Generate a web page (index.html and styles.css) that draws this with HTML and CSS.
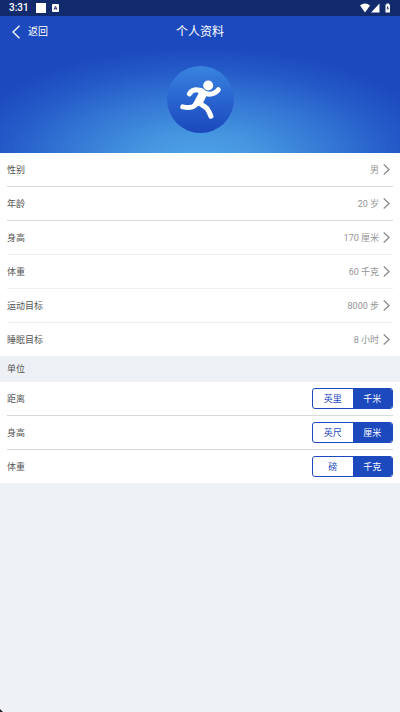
FILE: index.html
```html
<!DOCTYPE html>
<html lang="zh-CN">
<head>
<meta charset="utf-8">
<meta name="viewport" content="width=device-width, initial-scale=1">
<title>个人资料</title>
<link rel="stylesheet" href="styles.css">
</head>
<body>
<div class="status">
  <span class="clock">3:31</span>
  <span class="block"></span>
  <svg class="app" viewBox="0 0 7 8"><rect width="7" height="8" rx="1" fill="#fff"/><path d="M2 5.700 3.500 2.300 5 5.700M2.600 4.700h1.800" fill="none" stroke="#122b6c" stroke-width=".9"/></svg>
  <svg class="signals" viewBox="0 0 32 10"><path d="M0 2.400Q5 -1.400 10 2.400L5 9.500Z"/><path d="M19.500 .5V9.500H11Z"/><path d="M25.500 1.500h1V.5h2.500v1h1V9.500h-4.500Z"/><path d="M28 2.600 26.600 5.600h1v2.200l1.300-3h-.9z" fill="#122b6c"/></svg>
</div>
<header class="hero">
  <nav class="bar">
    <a class="back" href="#"><svg viewBox="0 0 8 14"><path d="M7.500 .7 1 7l6.500 6.300"/></svg>返回</a>
    <h1>个人资料</h1>
  </nav>
  <svg class="avatar" viewBox="0 0 200 200" role="img" aria-label="头像">
    <defs><linearGradient id="disc" x2="0" y2="1"><stop offset="0" stop-color="#3984df"/><stop offset=".5" stop-color="#2964d0"/><stop offset="1" stop-color="#1b48bc"/></linearGradient></defs>
    <circle cx="100" cy="100" r="100" fill="url(#disc)"/>
    <circle cx="123" cy="58" r="15" fill="#fff"/>
    <g fill="none" stroke="#fff" stroke-width="15" stroke-linecap="round" stroke-linejoin="round">
      <path d="M67 83Q74 72 86 71L102 73Q112 83 126 84Q143 83 153 71"/>
      <path d="M47 122Q74 127 84 117L93 106"/>
      <path d="M94 109 112 121Q121 126 126 138L131 150"/>
    </g>
    <path d="M88 68 106 67 120 84 105 116 84 122 78 112 94 82Z" fill="#fff"/>
  </svg>
</header>
<main>
  <ul class="list">
    <li><button class="row" type="button"><span>性别</span><span class="value">男</span><svg viewBox="0 0 6 10"><path d="M.5 .5 5.300 5 .5 9.500"/></svg></button></li>
    <li><button class="row" type="button"><span>年龄</span><span class="value">20 岁</span><svg viewBox="0 0 6 10"><path d="M.5 .5 5.300 5 .5 9.500"/></svg></button></li>
    <li class="light"><button class="row" type="button"><span>身高</span><span class="value">170 厘米</span><svg viewBox="0 0 6 10"><path d="M.5 .5 5.300 5 .5 9.500"/></svg></button></li>
    <li class="light"><button class="row" type="button"><span>体重</span><span class="value">60 千克</span><svg viewBox="0 0 6 10"><path d="M.5 .5 5.300 5 .5 9.500"/></svg></button></li>
    <li class="light"><button class="row" type="button"><span>运动目标</span><span class="value">8000 步</span><svg viewBox="0 0 6 10"><path d="M.5 .5 5.300 5 .5 9.500"/></svg></button></li>
    <li><button class="row" type="button"><span>睡眠目标</span><span class="value">8 小时</span><svg viewBox="0 0 6 10"><path d="M.5 .5 5.300 5 .5 9.500"/></svg></button></li>
  </ul>
  <h2>单位</h2>
  <ul class="list">
    <li><div class="row" role="radiogroup" aria-labelledby="distance"><span id="distance">距离</span>
      <div class="segment"><label><input type="radio" name="distance">英里</label><label><input type="radio" name="distance" checked>千米</label></div></div></li>
    <li><div class="row" role="radiogroup" aria-labelledby="height"><span id="height">身高</span>
      <div class="segment"><label><input type="radio" name="height">英尺</label><label><input type="radio" name="height" checked>厘米</label></div></div></li>
    <li><div class="row" role="radiogroup" aria-labelledby="weight"><span id="weight">体重</span>
      <div class="segment"><label><input type="radio" name="weight">磅</label><label><input type="radio" name="weight" checked>千克</label></div></div></li>
  </ul>
</main>
<div class="corner"></div>
</body>
</html>
```
FILE: styles.css
```css
* {
  box-sizing: border-box;
}

body {
  margin: 0;
  min-height: 100vh;
  background: #edf1f5;
  color: #555;
  font: 9px/16px Roboto, "Noto Sans CJK SC", sans-serif;
}

.status {
  display: flex;
  align-items: center;
  height: 16px;
  padding: 0 8px 0 9px;
  background: #122b6c;
  color: #fff;
}

.clock {
  font-size: 10px;
  font-weight: 500;
}

.block {
  width: 10px;
  height: 10px;
  margin: 0 6px 0 7px;
  background: #fff;
}

.app {
  width: 7px;
  height: 8px;
}

.signals {
  width: 32px;
  height: 10px;
  margin-left: auto;
  fill: #fff;
}

.hero {
  height: 137px;
  background: radial-gradient(ellipse 62% 84% at 50% 106%, #4fa5e8 0%, #4595e0 25%, #3376d4 55%, #2459c8 80%, #1c49be 100%);
}

.bar {
  display: grid;
  grid-template-columns: 1fr auto 1fr;
  align-items: center;
  height: 31px;
  padding: 0 12px;
  color: #fff;
}

.back {
  display: flex;
  align-items: center;
  gap: 8px;
  color: inherit;
  font-size: 10px;
  text-decoration: none;
}

.back svg {
  width: 8px;
  height: 14px;
  fill: none;
  stroke: currentColor;
  stroke-width: 1.3;
}

h1 {
  margin: 0;
  font-size: 12px;
  font-weight: 400;
}

.avatar {
  display: block;
  width: 67px;
  height: 67px;
  margin: 19px auto 0;
}

.list {
  margin: 0;
  padding: 0 7px;
  background: #fff;
  list-style: none;
}

.list li {
  border-bottom: 1px solid #d9d9d9;
}

.list li.light {
  border-color: #f0f0f0;
}

.list li:last-child {
  border: 0;
}

.row {
  display: flex;
  align-items: center;
  width: 100%;
  height: 33px;
  padding: 0;
  border: 0;
  background: none;
  color: inherit;
  font: inherit;
  text-align: left;
}

button.row {
  padding-right: 3px;
}

.value {
  margin-left: auto;
  color: #949494;
}

.row svg {
  width: 7px;
  height: 11px;
  margin-left: 4px;
  fill: none;
  stroke: #8c8c8c;
  stroke-width: 1.2;
}

h2 {
  margin: 0;
  padding: 5px 7px;
  font-size: 9px;
  font-weight: 400;
}

.segment {
  display: grid;
  grid-template-columns: 1fr 1fr;
  width: 81px;
  height: 21px;
  margin-left: auto;
  overflow: hidden;
  border: 1px solid #1c49be;
  border-radius: 3px;
  color: #1c49be;
}

.segment label {
  display: grid;
  place-items: center;
}

.segment input {
  position: absolute;
  appearance: none;
  margin: 0;
}

.segment label:has(:checked) {
  background: #1c49be;
  color: #fff;
}

.corner {
  position: fixed;
  bottom: 0;
  left: 0;
  border-bottom: 3px solid #222;
  border-right: 3px solid transparent;
}
```
